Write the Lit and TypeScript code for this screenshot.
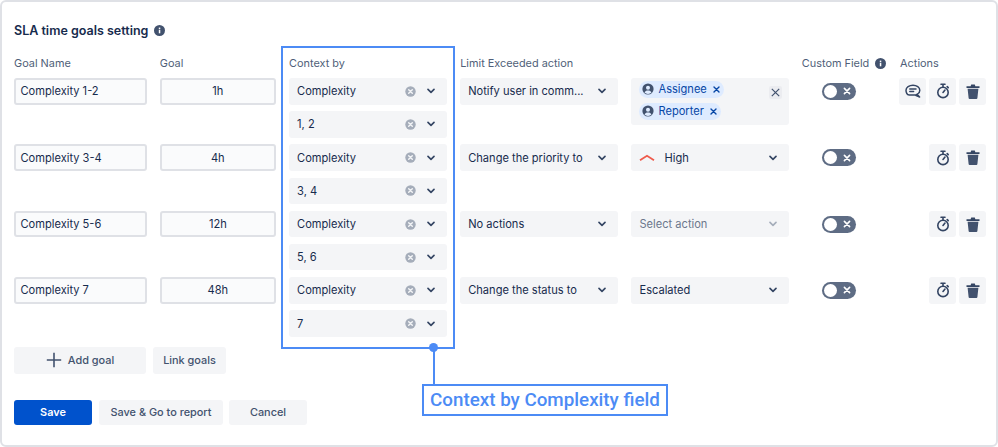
import { LitElement, html, css } from "lit";
import { customElement } from "lit/decorators.js";

const chev = () => html`<svg class="chev" width="8" height="6" viewBox="0 0 8 6"><path d="M1 1.400 4 4.400l3-3" fill="none" stroke="currentColor" stroke-width="1.600" stroke-linecap="round" stroke-linejoin="round"/></svg>`;
const clear = html`<svg class="clear" width="11" height="11" viewBox="0 0 11 11"><circle cx="5.500" cy="5.500" r="5.200" fill="#a5adba"/><path d="M3.700 3.700l3.600 3.600M7.300 3.700 3.700 7.300" stroke="#f4f5f7" stroke-width="1.400" stroke-linecap="round"/></svg>`;
const info = html`<svg class="info" width="11" height="11" viewBox="0 0 11 11"><circle cx="5.500" cy="5.500" r="5.500" fill="#42526e"/><rect x="4.800" y="4.700" width="1.500" height="3.600" fill="#fff"/><rect x="4.800" y="2.600" width="1.500" height="1.400" fill="#fff"/></svg>`;
const user = html`<svg class="info" width="12" height="12" viewBox="0 0 12 12"><circle cx="6" cy="6" r="5.600" fill="#42526e"/><circle cx="6" cy="4.700" r="2" fill="#deebff"/><path d="M2.500 9.600C3 7.900 4.400 7.400 6 7.400s3 .5 3.500 2.200A5 5 0 0 1 6 11a5 5 0 0 1-3.500-1.400z" fill="#deebff"/></svg>`;
const timer = html`<svg width="14" height="16" viewBox="0 0 14 16" fill="none" stroke="#344563" stroke-width="1.600" stroke-linecap="round"><circle cx="7" cy="9.400" r="5.200"/><path d="M5 1.300h4M7 1.600v2.400M11.200 3.600l1 1M7 9.400l2-2.400"/></svg>`;
const trash = html`<svg width="14" height="15" viewBox="0 0 14 15"><path d="M.5 2.200h13v1.700H.5zM4.600 2.200 5.200.6h3.600l.6 1.600z" fill="#344563"/><path d="M1.600 4.700h10.800l-1 9.300a1 1 0 0 1-1 .9H3.600a1 1 0 0 1-1-.9z" fill="#42526e"/></svg>`;
const comment = html`<svg width="16" height="15" viewBox="0 0 16 15" fill="none" stroke="#344563" stroke-width="1.500" stroke-linecap="round" stroke-linejoin="round"><path d="M8 1.200c3.700 0 6.800 2.100 6.800 5s-3 4.900-6.800 4.900H4.200C2.200 10.600 1 8.600 1 6.200c0-2.900 3.200-5 7-5zM12 10.200l2.600 2.800-4-1.600"/><path d="M4.800 5h6.200M4.800 7.400h3.800"/></svg>`;
const toggle = html`<span class="toggle"><span class="knob"></span><svg width="8" height="8" viewBox="0 0 8 8"><path d="M1.400 1.400l5.200 5.200M6.600 1.400 1.400 6.600" stroke="#fff" stroke-width="1.600" stroke-linecap="round"/></svg></span>`;
const x = html`<svg class="tagx" width="7" height="7" viewBox="0 0 7 7"><path d="M1 1l5 5M6 1 1 6" stroke="#0747a6" stroke-width="1.400" stroke-linecap="round"/></svg>`;

interface Row { name: string; goal: string; ctx: string; act: string; val: unknown; comment?: boolean; }

@customElement("app-root")
export class AppRoot extends LitElement {
  static styles = css`
    :host { display: block; width: 998px; height: 447px; font-family: Inter, Roboto, sans-serif; color: #172b4d; font-size: 11.100px; }
    * { box-sizing: border-box; }
    .card { position: relative; width: 998px; height: 447px; border: 2px solid #dfe1e6; border-radius: 6px; background: #fff; padding: 20px 10px 0 12px; overflow: hidden; }
    .title { display: flex; align-items: center; gap: 6px; height: 17px; font-size: 12.500px; font-weight: 600; color: #172b4d; }
    .info { flex-shrink: 0; }
    .grid { display: grid; grid-template-columns: 132.500px 116px 157.800px 158px 158px 85px 90px; column-gap: 13.300px; margin-top: 15px; }
    .head { height: 24px; font-size: 10.900px; color: #505f79; display: flex; align-items: center; gap: 6px; padding-bottom: 6px; white-space: nowrap; }
    .head.nudge { margin-left: -1px; }
    .field { height: 26.500px; display: flex; align-items: center; background: #fafbfc; border: 2px solid #dfe1e6; border-radius: 3px; padding: 0 4.500px; }
    .field.center { justify-content: center; }
    .sel { height: 26.500px; display: flex; align-items: center; background: #f4f5f7; border-radius: 3px; padding: 0 8px; white-space: nowrap; }
    .sel .txt { flex: 1; overflow: hidden; }
    .sel.muted .txt { color: #6b778c; }
    .sel.muted .chev { color: #a5adba; }
    .clear { margin-right: 4px; }
    .chev { color: #344563; margin-left: 7px; margin-right: 4px; }
    .stack { display: flex; flex-direction: column; gap: 6.700px; padding-bottom: 6.700px; }
    .multi { background: #f4f5f7; border-radius: 3px; height: 46.500px; padding: 3px 7px 0 8px; display: flex; }
    .tags { display: flex; flex-direction: column; align-items: flex-start; gap: 5.500px; flex: 1; }
    .tag { height: 16.500px; display: flex; align-items: center; gap: 4px; background: #deebff; color: #0747a6; border-radius: 8.500px; padding: 0 4.500px 0 3px; }
    .tagx { margin-left: 2px; }
    .bigx { align-self: flex-start; margin-top: 5px; width: 13px; height: 13px; display: flex; align-items: center; justify-content: center; background: #ebecf0; border-radius: 2px; }
    .tcell { height: 26.500px; display: flex; align-items: center; padding-left: 19.500px; }
    .toggle { width: 34px; height: 17px; border-radius: 9px; background: #5e6c84; display: flex; align-items: center; justify-content: flex-end; padding-right: 5px; position: relative; }
    .knob { position: absolute; left: 2px; top: 2px; width: 13px; height: 13px; border-radius: 50%; background: #fff; }
    .acts { height: 26.500px; display: flex; justify-content: flex-end; gap: 3px; margin-left: -2px; width: 87px; }
    .ib { width: 27px; height: 26.500px; background: #f4f5f7; border-radius: 3px; display: flex; align-items: center; justify-content: center; }
    .btnrow { display: flex; gap: 7px; }
    .btn { height: 27px; display: flex; align-items: center; justify-content: center; background: #f4f5f7; border-radius: 3px; font-size: 10.900px; font-weight: 500; color: #42526e; }
    .top { margin-top: 3px; }
    .add { width: 132px; gap: 6px; }
    .link { width: 73px; }
    .foot { margin-top: 26px; }
    .foot .btn { height: 25.500px; }
    .save { width: 78px; background: #0052cc; color: #fff; font-weight: 600; }
    .go { width: 124px; }
    .cancel { width: 78px; margin-left: -1px; }
    .frame { position: absolute; left: 279px; top: 44px; width: 174px; height: 303px; border: 2px solid #4c8bf5; pointer-events: none; }
    .dot { position: absolute; left: 427px; top: 341px; width: 9px; height: 9px; border-radius: 50%; background: #4c8bf5; }
    .line { position: absolute; left: 431px; top: 348px; width: 2px; height: 34px; background: #4c8bf5; }
    .callout { position: absolute; left: 420px; top: 382px; width: 246px; height: 32px; border: 2px solid #4c8bf5; display: flex; align-items: center; justify-content: center; font-family: Roboto, sans-serif; font-size: 18.800px; font-weight: 500; color: #4c8bf5; white-space: nowrap; background: #fff; }
  `;

  render() {
    const rows: Row[] = [
      { name: "Complexity 1-2", goal: "1h", ctx: "1, 2", act: "Notify user in comm...", comment: true,
        val: html`<div class="multi"><div class="tags">
          <span class="tag">${user}Assignee${x}</span><span class="tag">${user}Reporter${x}</span></div>
          <span class="bigx"><svg width="9" height="9" viewBox="0 0 9 9"><path d="M.8.8l7.400 7.400M8.200.8.800 8.200" stroke="#42526e" stroke-width="1.200"/></svg></span></div>` },
      { name: "Complexity 3-4", goal: "4h", ctx: "3, 4", act: "Change the priority to",
        val: html`<div class="sel"><svg class="prio" width="16" height="8" viewBox="0 0 16 8"><path d="M1 6.300 8 1.800l7 4.500" fill="none" stroke="#ef5b4c" stroke-width="1.800"/></svg><span class="txt" style="margin-left:9px">High</span>${chev()}</div>` },
      { name: "Complexity 5-6", goal: "12h", ctx: "5, 6", act: "No actions",
        val: html`<div class="sel muted"><span class="txt">Select action</span>${chev()}</div>` },
      { name: "Complexity 7", goal: "48h", ctx: "7", act: "Change the status to",
        val: html`<div class="sel"><span class="txt">Escalated</span>${chev()}</div>` },
    ];
    return html`<div class="card">
      <div class="title">SLA time goals setting ${info}</div>
      <div class="grid">
        <div class="head">Goal Name</div><div class="head">Goal</div><div class="head">Context by</div>
        <div class="head">Limit Exceeded action</div><div class="head"></div>
        <div class="head nudge">Custom Field ${info}</div><div class="head nudge">Actions</div>
        ${rows.map((r) => html`
          <div class="field">${r.name}</div>
          <div class="field center">${r.goal}</div>
          <div class="stack">
            <div class="sel"><span class="txt">Complexity</span>${clear}${chev()}</div>
            <div class="sel"><span class="txt">${r.ctx}</span>${clear}${chev()}</div>
          </div>
          <div><div class="sel"><span class="txt">${r.act}</span>${chev()}</div></div>
          <div>${r.val}</div>
          <div class="tcell">${toggle}</div>
          <div class="acts">
            ${r.comment ? html`<span class="ib">${comment}</span>` : ""}
            <span class="ib">${timer}</span><span class="ib">${trash}</span>
          </div>`)}
      </div>
      <div class="btnrow top">
        <div class="btn add"><svg width="16" height="16" viewBox="0 0 16 16"><path d="M8 .8v14.400M.8 8h14.400" stroke="#42526e" stroke-width="1.600"/></svg>Add goal</div>
        <div class="btn link">Link goals</div>
      </div>
      <div class="btnrow foot">
        <div class="btn save">Save</div><div class="btn go">Save &amp; Go to report</div><div class="btn cancel">Cancel</div>
      </div>
      <div class="frame"></div><div class="line"></div><div class="dot"></div>
      <div class="callout">Context by Complexity field</div>
    </div>`;
  }
}
